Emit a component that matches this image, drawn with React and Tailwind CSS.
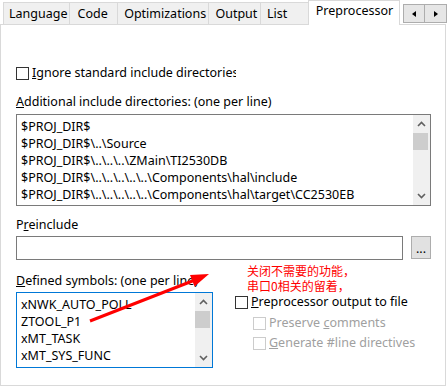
import React from 'react';

const Chevron = ({ up }) => (
  <svg width="9" height="6" viewBox="0 0 9 6">
    <polyline
      points={up ? '1,5 4.5,1.5 8,5' : '1,1 4.5,4.5 8,1'}
      fill="none"
      stroke="#606060"
      strokeWidth="1.6"
    />
  </svg>
);

const Scrollbar = () => (
  <div className="w-[17px] h-full bg-[#f0f0f0] flex flex-col shrink-0">
    <div className="h-[18px] flex items-center justify-center">
      <Chevron up />
    </div>
    <div className="h-[17px] w-[15px] bg-[#cdcdcd]" />
    <div className="flex-1" />
    <div className="h-[18px] flex items-center justify-center">
      <Chevron />
    </div>
  </div>
);

const Box = ({ disabled }) => (
  <div
    className={
      'w-[13px] h-[13px] border bg-white shrink-0 ' +
      (disabled ? 'border-[#cccccc]' : 'border-[#333333]')
    }
  />
);

const tabs = [
  { label: 'Language', w: 'w-[67px]', pl: 'pl-[5px]' },
  { label: 'Code', w: 'w-[48px]', pl: 'pl-[7px]' },
  { label: 'Optimizations', w: 'w-[92px]', pl: 'pl-[6px]' },
  { label: 'Output', w: 'w-[52px]', pl: 'pl-[6px]' },
  { label: 'List', w: 'w-[48px]', pl: 'pl-[6px]' },
];

const includeDirs = [
  '$PROJ_DIR$',
  '$PROJ_DIR$\\..\\Source',
  '$PROJ_DIR$\\..\\..\\..\\ZMain\\TI2530DB',
  '$PROJ_DIR$\\..\\..\\..\\..\\..\\Components\\hal\\include',
  '$PROJ_DIR$\\..\\..\\..\\..\\..\\Components\\hal\\target\\CC2530EB',
];

const symbols = ['xNWK_AUTO_POLL', 'ZTOOL_P1', 'xMT_TASK', 'xMT_SYS_FUNC'];

export default function App() {
  return (
    <div className="relative w-[447px] h-[388px] bg-white overflow-hidden text-[12.5px] text-black font-['Noto_Sans',sans-serif] leading-[16px]">
      {/* tab strip */}
      <div className="h-[24px] flex items-end pl-[3px]">
        {tabs.map((t) => (
          <div
            key={t.label}
            className={`${t.w} ${t.pl} h-[22px] border-t border-l border-[#d9d9d9] bg-[#f0f0f0] pt-[3px] whitespace-nowrap overflow-hidden`}
          >
            {t.label}
          </div>
        ))}
        <div className="relative z-10 -mb-px w-[93px] h-[25px] pl-[7px] pt-[2px] bg-white border-t border-l border-r border-[#d9d9d9] whitespace-nowrap">
          Preprocessor
        </div>
        <div className="self-start mt-[4px] ml-[3px] flex h-[19px] border border-[#adadad] bg-[#e6e6e6]">
          <div className="w-[21px] border-r border-[#adadad] flex items-center justify-center">
            <svg width="4" height="6" viewBox="0 0 4 6">
              <polygon points="4,0 4,6 0,3" fill="#000" />
            </svg>
          </div>
          <div className="w-[21px] flex items-center justify-center">
            <svg width="4" height="6" viewBox="0 0 4 6">
              <polygon points="0,0 0,6 4,3" fill="#000" />
            </svg>
          </div>
        </div>
      </div>

      {/* panel */}
      <div className="w-[446px] h-[362px] border border-[#d9d9d9] pl-[15px]">
        <div className="mt-[40px] h-[16px] flex items-center gap-[3px]">
          <Box />
          <div className="w-[204px] overflow-hidden whitespace-nowrap">
            <u>I</u>gnore standard include directories
          </div>
        </div>

        <div className="mt-[13px] whitespace-nowrap">
          <u>A</u>dditional include directories: (one per line)
        </div>
        <div className="mt-[4px] w-[415px] h-[92px] border border-[#7a7a7a] flex">
          <div className="flex-1 pl-[4px] pt-[3px] leading-[17px] whitespace-nowrap overflow-hidden">
            {includeDirs.map((d) => (
              <div key={d}>{d}</div>
            ))}
          </div>
          <Scrollbar />
        </div>

        <div className="mt-[11px]">
          P<u>r</u>einclude
        </div>
        <div className="mt-[3px] flex items-start gap-[8px]">
          <div className="w-[387px] h-[24px] border border-[#7a7a7a]" />
          <div className="w-[20px] h-[23px] border border-[#adadad] bg-[#e1e1e1] flex items-end justify-center pb-[4px] leading-[10px]">
            ...
          </div>
        </div>

        <div className="mt-[13px] w-[197px] overflow-hidden whitespace-nowrap">
          <u>D</u>efined symbols: (one per line)
        </div>
        <div className="mt-[3px] flex">
          <div className="w-[197px] h-[76px] border border-[#0078d7] flex">
            <div className="flex-1 pl-[4px] pt-[3px] leading-[17px] whitespace-nowrap overflow-hidden">
              {symbols.map((s) => (
                <div key={s}>{s}</div>
              ))}
            </div>
            <Scrollbar />
          </div>
          <div className="ml-[22px]">
            <div className="mt-[2px] h-[16px] flex items-center gap-[3px]">
              <Box />
              <div>
                <u>P</u>reprocessor output to file
              </div>
            </div>
            <div className="mt-[5px] pl-[18px] h-[16px] flex items-center gap-[3px] text-[#a0a0a0]">
              <Box disabled />
              <div>
                Preserve <u>c</u>omments
              </div>
            </div>
            <div className="mt-[4px] pl-[18px] h-[16px] flex items-center gap-[3px] text-[#a0a0a0]">
              <Box disabled />
              <div>
                <u>G</u>enerate #line directives
              </div>
            </div>
          </div>
        </div>
      </div>

      {/* annotation */}
      <div className="absolute left-[247px] top-[263px] text-[#ff0000] text-[12px] leading-[15px] font-['Noto_Sans_CJK_SC',sans-serif]">
        <div>关闭不需要的功能，</div>
        <div>串口0相关的留着，</div>
      </div>
      <svg className="absolute left-0 top-0 pointer-events-none" width="447" height="388">
        <line x1="90" y1="321" x2="195" y2="280" stroke="#ff0000" strokeWidth="3" />
        <polygon points="209,274 194.5,286.5 190,275" fill="#ff0000" />
      </svg>
    </div>
  );
}
